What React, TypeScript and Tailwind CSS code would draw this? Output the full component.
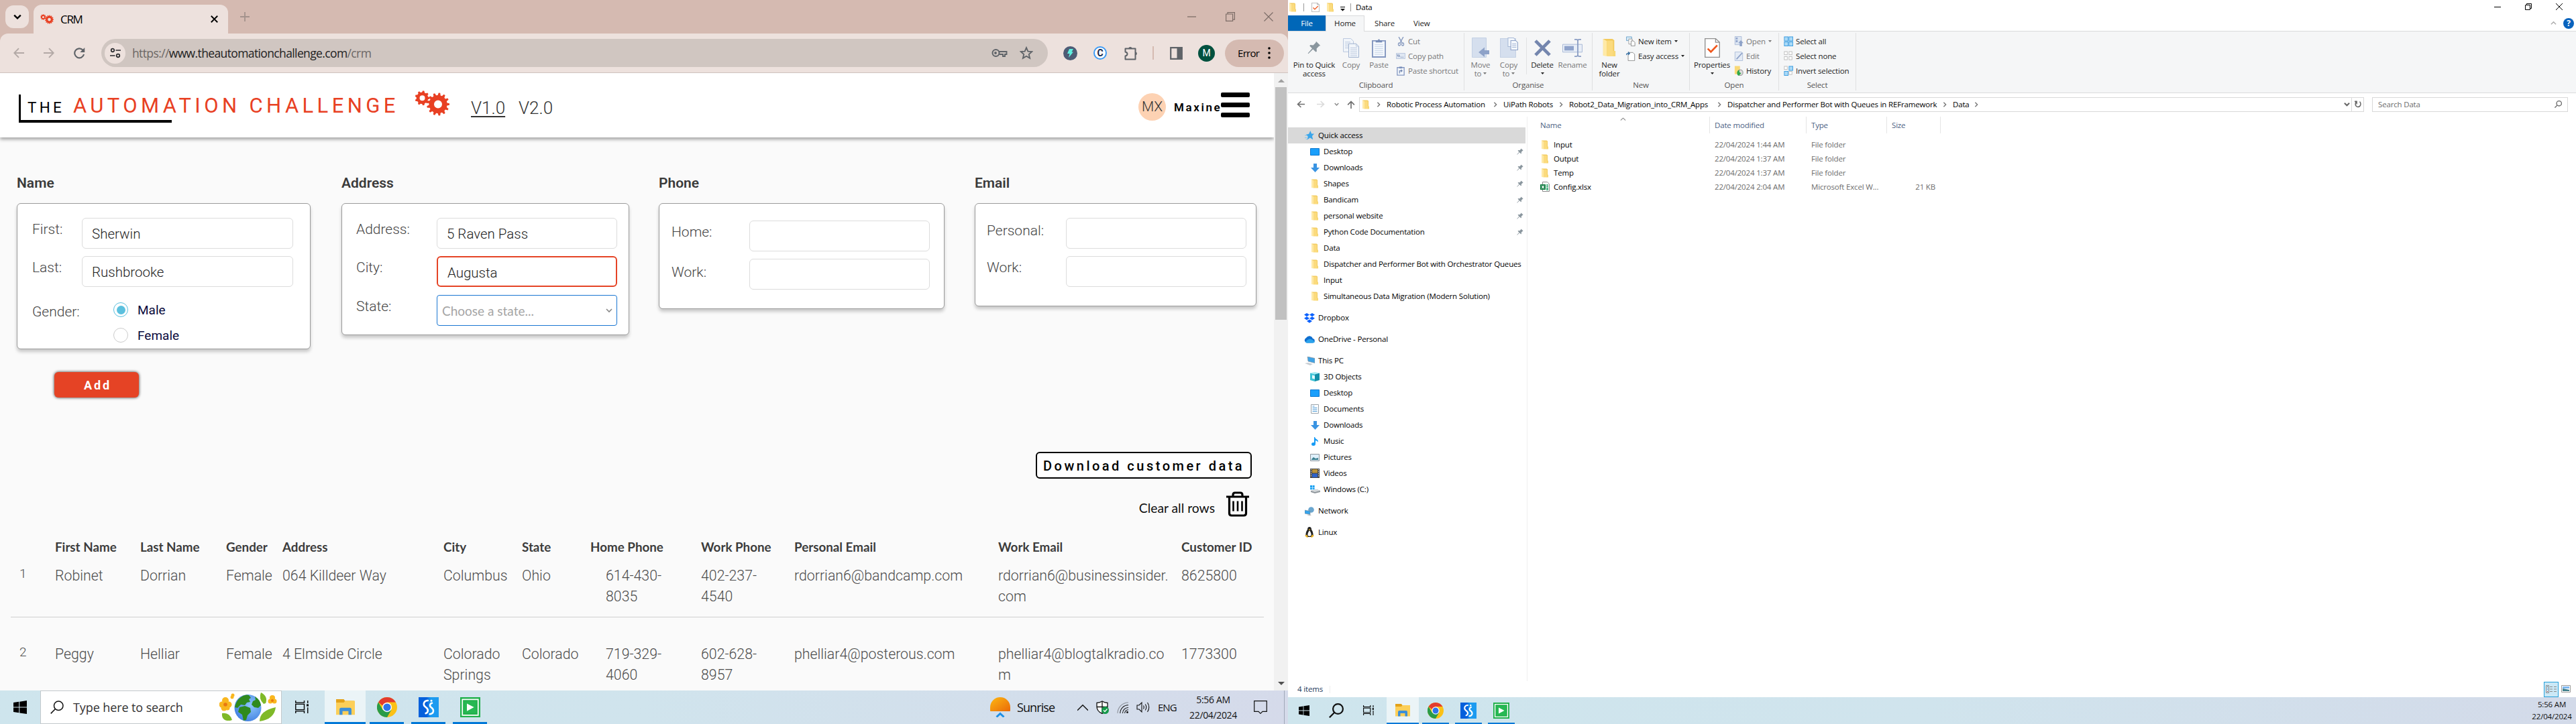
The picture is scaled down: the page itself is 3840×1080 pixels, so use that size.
import React from "react";

const SEG = "font-['Open_Sans',sans-serif]";
const BAR = "font-['Roboto',sans-serif]";
const LATO = "font-['Lato',sans-serif]";

type P = { className?: string };
type Kids = { className?: string; children?: React.ReactNode };

/* ---------- shared icons ---------- */

const Svg = ({ className = "", vb = "0 0 16 16", children }: Kids & { vb?: string }) => (
  <svg viewBox={vb} className={`shrink-0 ${className}`} fill="none" preserveAspectRatio="none">
    {children}
  </svg>
);

const gearPath = (cx: number, cy: number, r: number, n: number, hole: number) => {
  const pts: string[] = [];
  for (let i = 0; i < n; i++) {
    const a = (i / n) * Math.PI * 2;
    const s = (Math.PI * 2) / n;
    [
      [0.8, -0.32],
      [1, -0.15],
      [1, 0.15],
      [0.8, 0.32],
    ].forEach(([k, o]) => {
      pts.push(`${(cx + Math.cos(a + o * s) * r * k).toFixed(2)} ${(cy + Math.sin(a + o * s) * r * k).toFixed(2)}`);
    });
  }
  return `M${pts.join("L")}Z M${cx + hole} ${cy}a${hole} ${hole} 0 1 0 ${-2 * hole} 0a${hole} ${hole} 0 1 0 ${2 * hole} 0Z`;
};

const Gears = ({ className = "" }: P) => (
  <Svg className={className} vb="0 0 52 38">
    <path fillRule="evenodd" fill="#e84023" d={gearPath(11.5, 11.3, 11, 9, 4)} />
    <path fillRule="evenodd" fill="#e84023" d={gearPath(35, 20.5, 17, 13, 6)} />
  </Svg>
);

const Folder = ({ className = "" }: P) => (
  <Svg className={className} vb="0 0 12 14">
    <path d="M1 0.5h7.5l1.5 1v11.5H1z" fill="#f2ca5c" />
    <path d="M8.6 9.5l2.4 0v4H8.6z" fill="#f7d774" />
    <path d="M1 0.5l3 1.6v11.4L1 13z" fill="#ffe9a6" />
    <path d="M4 1.8h5v11.7H4z" fill="#fbdb7e" />
  </Svg>
);

const Pin = ({ className = "" }: P) => (
  <Svg className={className}>
    <path d="M10.4 0.6l5 5-1.6.6-2.9 3 .2 3.4-1.2.6-3.3-3.3L1 15.4l-.5-.6L5.6 9 2.6 6l.8-1.2 3.4.3 3-2.9z" fill="#8a969e" />
  </Svg>
);

const WinLogo = ({ className = "" }: P) => (
  <Svg className={className}>
    <path d="M0 2.4l6.6-1v6.2H0zM7.4 1.3L16 0v7.6H7.4zM0 8.4h6.6v6.2L0 13.6zM7.4 8.4H16V16l-8.600-1.200z" fill="#000" />
  </Svg>
);

const TaskView = ({ className = "" }: P) => (
  <Svg className={className}>
    <path d="M.6 0v2.6h10.2V0M.6 16v-2.6h10.2V16M.6 4.6h10.2v6.8H.6zM15 0v3.4M15 8.6V16" stroke="#000" strokeWidth="1.1" />
    <path d="M13.6 4.6h2.4v2.6h-2.4z" fill="#000" />
  </Svg>
);

const ExplorerIcon = ({ className = "" }: P) => (
  <Svg className={className} vb="0 0 22 19">
    <path d="M0 0h9l1.5 2H21v4H0z" fill="#e3a21a" />
    <path d="M0 4h9l1.6-2H22v16.5H0z" fill="#fccf59" />
    <path d="M4 18.5V12q0-2 2-2h10q2 0 2 2v6.5h-3.5V14h-7v4.500z" fill="#3c8fd8" />
  </Svg>
);

const Chrome = ({ className = "" }: P) => (
  <Svg className={className} vb="0 0 24 24">
    <circle cx="12" cy="12" r="12" fill="#fbc116" />
    <path d="M12 12l5.200 3L12 24A12 12 0 0 1 1.600 6l5.200 9z" fill="#2a9b48" />
    <path d="M12 0a12 12 0 0 1 10.400 6H12L6.500 10 1.600 6A12 12 0 0 1 12 0z" fill="#e33b2e" />
    <circle cx="12" cy="12" r="5.700" fill="#fff" />
    <circle cx="12" cy="12" r="4.500" fill="#2f74ea" />
  </Svg>
);

const StudioIcon = ({ className = "" }: P) => (
  <Svg className={className} vb="0 0 24 24">
    <defs>
      <linearGradient id="st" x1="0" y1="0" x2="1" y2="0">
        <stop offset="0.4" stopColor="#0560dc" />
        <stop offset="0.6" stopColor="#1d9bf0" />
      </linearGradient>
    </defs>
    <path d="M0 0h24v24H0z" fill="url(#st)" />
    <path d="M11 4C7 4 5.800 7 6.300 9.300c.7 3 5.400 3 4.700 7.200-.3 1.700-1.300 2.500-2.500 2.800" stroke="#fff" strokeWidth="2.100" strokeLinecap="round" />
    <path d="M16 7c-2.500.5-3 3-1.800 4.500 1.500 1.500 3.800 2 3.300 5.500-.4 2-2 3-4.200 3.200" stroke="#fff" strokeWidth="2.100" strokeLinecap="round" />
    <circle cx="15.200" cy="4.200" r="1.200" fill="#fff" />
  </Svg>
);

const RobotIcon = ({ className = "" }: P) => (
  <Svg className={className} vb="0 0 24 24">
    <path d="M0 0h24v24H0z" fill="#22b14c" />
    <path d="M2.600 2.600h18.800v18.800H2.600z" stroke="#fff" strokeWidth="1.400" />
    <path d="M5 5h14v14H5z" fill="#27b853" />
    <path d="M8 7.500l8.500 4.500L8 16.500z" fill="#fff" />
  </Svg>
);

const Magnifier = ({ className = "", w = 1.4 }: P & { w?: number }) => (
  <Svg className={className}>
    <circle cx="9.800" cy="6.200" r="5.400" stroke="currentColor" strokeWidth={w} />
    <path d="M6 10L.6 15.500" stroke="currentColor" strokeWidth={w} />
  </Svg>
);

const Chev = ({ className = "", d = "M1 3l4 4 4-4", w = 1.5 }: P & { d?: string; w?: number }) => (
  <Svg className={className} vb="0 0 10 10">
    <path d={d} stroke="currentColor" strokeWidth={w} />
  </Svg>
);

const Tri = ({ className = "" }: P) => (
  <Svg className={className} vb="0 0 8 4">
    <path d="M0 0h8L4 4z" fill="currentColor" />
  </Svg>
);

/* ---------- browser window ---------- */

const TabStrip = () => (
  <div className="flex h-[50px] items-end bg-[#d5bab1] text-black">
    <div className="mb-2 ml-2 flex h-[34px] w-[35px] items-center justify-center rounded-xl bg-[#ede1dd]">
      <Chev className="h-3 w-3" w={2} />
    </div>
    <div className="ml-[7px] flex h-[43px] w-[290px] items-center rounded-t-xl bg-[#ede1dd]">
      <Gears className="ml-[10px] h-[15px] w-5" />
      <span className={`${SEG} ml-[10px] w-[224px] shrink-0 text-[17px] tracking-[-1.3px]`}>CRM</span>
      <Svg className="h-[11px] w-[11px]" vb="0 0 10 10">
        <path d="M.7.7l8.600 8.600M9.300.7L.7 9.300" stroke="#000" strokeWidth="1.700" />
      </Svg>
    </div>
    <Svg className="mb-[18px] ml-[18px] h-[14px] w-[14px]" vb="0 0 14 14">
      <path d="M7 0v14M0 7h14" stroke="#a3928c" strokeWidth="1.800" />
    </Svg>
    <div className="mb-[18px] ml-auto mr-[22px] flex items-center gap-[43px]">
      <Svg className="h-[14px] w-[14px]" vb="0 0 14 14">
        <path d="M0 7h13" stroke="#7d6d67" strokeWidth="1.300" />
      </Svg>
      <Svg className="h-[14px] w-[14px]" vb="0 0 14 14">
        <path d="M.6 3h10v10.400h-10zM3 3V.6h10.400v10.600h-2.600" stroke="#7d6d67" strokeWidth="1.200" />
      </Svg>
      <Svg className="h-[14px] w-[14px]" vb="0 0 14 14">
        <path d="M.5.5l13 13M13.500.5l-13 13" stroke="#7d6d67" strokeWidth="1.200" />
      </Svg>
    </div>
  </div>
);

const Toolbar = () => (
  <div className="bg-[#d5bab1]">
    <div className="flex h-[59px] items-center rounded-t-xl border-b border-[#cfc3bf] bg-[#ede1dd] text-[#5f6368]">
      <Svg className="ml-5 h-4 w-4">
        <path d="M16 8H1.500M8 1.200L1.300 8 8 14.800" stroke="#b3a9a6" strokeWidth="1.900" />
      </Svg>
      <Svg className="ml-[29px] h-4 w-4">
        <path d="M0 8h14.500M8 1.200L14.700 8 8 14.800" stroke="#b3a9a6" strokeWidth="1.900" />
      </Svg>
      <Svg className="ml-[29px] h-[17px] w-[17px]">
        <path d="M14.200 9.500A6.600 6.600 0 1 1 12.600 3.300L14.500 5.200" stroke="#5f6368" strokeWidth="2" />
        <path d="M15.300 0v6.500H8.800z" fill="#5f6368" />
      </Svg>
      <div className="ml-6 flex h-[42px] w-[1411px] shrink-0 items-center rounded-full bg-[#d0c6c1]">
        <div className="ml-[5px] flex h-[31px] w-[31px] items-center justify-center rounded-full bg-[#ede1dd]">
          <Svg className="h-4 w-4" vb="0 0 16 16">
            <circle cx="4" cy="4" r="2.300" stroke="#28292c" strokeWidth="1.700" />
            <circle cx="12" cy="12" r="2.300" stroke="#28292c" strokeWidth="1.700" />
            <path d="M8.500 4H16M0 12h7.500" stroke="#28292c" strokeWidth="1.700" />
          </Svg>
        </div>
        <div className={`${SEG} ml-[10px] w-[1132px] whitespace-nowrap text-[17.5px] tracking-[-0.62px] text-[#6b6765]`}>
          https://<span className="text-[#222]">www.theautomationchallenge.com</span>/crm
        </div>
        <Svg className="ml-[149px] h-3 w-6" vb="0 0 24 12">
          <circle cx="6.500" cy="6" r="5" stroke="#5f6368" strokeWidth="2" />
          <circle cx="6" cy="6" r="1.900" fill="#5f6368" />
          <path d="M11 4h11.500v4H20v3h-3V8h-5.500" stroke="#5f6368" strokeWidth="1.900" />
        </Svg>
        <Svg className="ml-[18px] h-5 w-5">
          <path d="M8 1.700l1.900 4.400 4.700.4-3.600 3.100 1.100 4.700L8 11.800l-4.100 2.500L5 9.600 1.400 6.500l4.700-.4z" stroke="#5f6368" strokeWidth="1.500" />
        </Svg>
      </div>
      <div className="ml-[23px] flex h-[21px] w-[21px] items-center justify-center rounded-full bg-[#4d5b75]">
        <Svg className="h-[13px] w-[9px]" vb="0 0 9 13">
          <path d="M3 0h6L6.500 4.500H9L2 13l1.500-6H0z" fill="#5ff0e0" />
        </Svg>
      </div>
      <div className={`ml-6 flex h-5 w-5 items-center justify-center rounded-full border-2 border-[#3d9bf5] bg-white text-[14px] font-bold text-[#152447] ${BAR}`}>C</div>
      <Svg className="ml-[25px] h-[21px] w-[21px]" vb="0 0 21 21">
        <path d="M2.500 3.500h15v16h-15V14.500q3-.5 3-3t-3-3z" stroke="#5f6368" strokeWidth="2" strokeLinejoin="round" />
        <path d="M7.300 3.500a2.600 2.600 0 0 1 5.200 0zM17.500 8.500a2.400 2.400 0 0 1 0 4.800z" fill="#5f6368" />
      </Svg>
      <div className="ml-[22px] h-5 w-[2px] bg-[#d5bab1]" />
      <Svg className="ml-6 h-[19px] w-[19px]" vb="0 0 19 19">
        <path d="M1.200 1.200h16.600v16.600H1.200z" stroke="#5f6368" strokeWidth="2.200" />
        <path d="M10.500 1h7.500v17h-7.500z" fill="#5f6368" />
      </Svg>
      <div className={`ml-[23px] flex h-[25px] w-[25px] items-center justify-center rounded-full bg-[#01513f] text-[14px] text-white ${BAR}`}>M</div>
      <div className="ml-[15px] flex h-[41px] w-[88px] items-center rounded-full bg-[#d5bab1] text-black">
        <span className={`${SEG} ml-[19px] w-[45px] text-[15px] tracking-[-0.7px]`}>Error</span>
        <Svg className="h-[18px] w-1" vb="0 0 4 18">
          <circle cx="2" cy="2" r="1.800" fill="#000" />
          <circle cx="2" cy="9" r="1.800" fill="#000" />
          <circle cx="2" cy="16" r="1.800" fill="#000" />
        </Svg>
      </div>
    </div>
  </div>
);

const SiteHeader = () => (
  <div className={`${BAR} flex h-24 shrink-0 bg-white shadow-[0_3px_5px_rgba(0,0,0,0.35)]`}>
    <div className="ml-7 mt-[32px] h-[42px] w-[228px] shrink-0 border-b-4 border-l-[3px] border-black">
      <div className="flex h-full items-baseline whitespace-nowrap pl-[10px]">
        <span className="w-[68px] shrink-0 text-[22.5px] leading-[38px] tracking-[4.2px] text-black">THE</span>
        <span className="text-[31px] leading-[30px] tracking-[5.4px] text-[#e84023]">AUTOMATION CHALLENGE</span>
      </div>
    </div>
    <Gears className="ml-[362px] mt-[26px] h-[38px] w-[52px]" />
    <div className="ml-8 mt-[37px] w-[71px] whitespace-nowrap text-[26px] font-light leading-[30px] text-[#333]">
      <span className="underline decoration-2 underline-offset-[3px]">V1.0</span>
    </div>
    <div className="mt-[37px] whitespace-nowrap text-[26px] font-light leading-[30px] text-[#333]">V2.0</div>
    <div className="ml-auto mt-[30px] flex h-[41px] w-[41px] items-center justify-center rounded-full bg-[#fdd2b3] text-[21px] font-light text-[#333]">MX</div>
    <div className="ml-[12px] mt-[41px] w-[70px] whitespace-nowrap text-[17px] font-semibold leading-5 tracking-[2.6px] text-black">Maxine</div>
    <div className="mr-9 mt-[29px] flex w-[43px] flex-col gap-2">
      <div className="h-[7px] rounded-[2px] bg-black" />
      <div className="h-[7px] rounded-[2px] bg-black" />
      <div className="h-[7px] rounded-[2px] bg-black" />
    </div>
  </div>
);

const Card = ({ title, w, h, ml, pt = "pt-[21px]", children }: { title: string; w: string; h: string; ml: string; pt?: string; children?: React.ReactNode }) => (
  <div className={`${ml} ${w}`}>
    <div className="h-[42px] text-[21px] font-semibold leading-6 text-[#3a3a3a]">{title}</div>
    <div className={`${h} ${pt} rounded-md border border-[#9b9b9b] bg-white shadow-[0_4px_5px_rgba(0,0,0,0.2)]`}>{children}</div>
  </div>
);

const Field = ({ label, pl, lw, pt = "pt-[5px]", w = "w-[269px]", border = "border border-[#dcdcdc]", value }: { label: string; pl: string; lw: string; pt?: string; w?: string; border?: string; value?: string }) => (
  <div className={`flex h-[57px] ${pl}`}>
    <div className={`${lw} ${pt} shrink-0 whitespace-nowrap text-[21px] font-light leading-6 text-[#444]`}>{label}</div>
    <div className={`h-[46px] ${w} ${border} rounded-md bg-white pl-[14px] text-[20.5px] font-light leading-[47px] text-[#222]`}>{value}</div>
  </div>
);

const Form = () => (
  <div className={`${BAR} mt-[56px] flex h-[294px] shrink-0`}>
    <Card title="Name" ml="ml-[25px]" w="w-[438px]" h="h-[218px]">
      <Field label="First:" pl="pl-[22px]" lw="w-[74px]" w="w-[315px]" value="Sherwin" />
      <Field label="Last:" pl="pl-[22px]" lw="w-[74px]" w="w-[315px]" value="Rushbrooke" />
      <div className="flex pl-[22px]">
        <div className="w-[121px] pt-[14px] text-[21px] font-light leading-6 text-[#444]">Gender:</div>
        <div className="flex flex-col gap-[14px] pt-[11px] text-[19px] leading-[22px] text-[#0a0a3c]">
          <div className="flex items-center">
            <div className="mr-[14px] flex h-[22px] w-[22px] items-center justify-center rounded-full border border-[#5bc0de] bg-white">
              <div className="h-[13px] w-[13px] rounded-full bg-[#5bc0de]" />
            </div>
            <span className="mt-[2px]">Male</span>
          </div>
          <div className="flex items-center">
            <div className="mr-[14px] h-[22px] w-[22px] rounded-full border border-[#ccc] bg-white" />
            <span className="mt-[2px]">Female</span>
          </div>
        </div>
      </div>
    </Card>
    <Card title="Address" ml="ml-[46px]" w="w-[429px]" h="h-[197px]">
      <Field label="Address:" pl="pl-[21px]" lw="w-[120px]" value="5 Raven Pass" />
      <Field label="City:" pl="pl-[21px]" lw="w-[120px]" border="border-2 border-[#e54325]" value="Augusta" />
      <div className="flex pl-[21px]">
        <div className="w-[120px] pt-[6px] text-[21px] font-light leading-6 text-[#444]">State:</div>
        <div className="mt-px flex h-[46px] w-[269px] items-center rounded border border-[#1976d2] bg-white pl-[7px]">
          <span className={`${LATO} mt-[3px] w-[244px] text-[19px] text-[#a5a5a5]`}>Choose a state...</span>
          <Chev className="h-[10px] w-[10px] text-[#888]" w={1.6} />
        </div>
      </div>
    </Card>
    <Card title="Phone" ml="ml-[44px]" w="w-[426px]" h="h-[158px]" pt="pt-[25px]">
      <Field label="Home:" pl="pl-[18px]" lw="w-[116px]" />
      <Field label="Work:" pl="pl-[18px]" lw="w-[116px]" pt="pt-[8px]" />
    </Card>
    <Card title="Email" ml="ml-[45px]" w="w-[420px]" h="h-[154px]">
      <Field label="Personal:" pl="pl-[17px]" lw="w-[118px]" pt="pt-[7px]" />
      <Field label="Work:" pl="pl-[17px]" lw="w-[118px]" />
    </Card>
  </div>
);

const COLS =
  "grid grid-cols-[66px_127px_128px_84px_240px_117px_102px_165px_139px_304px_273px_1fr]";

const HEADS = ["", "First Name", "Last Name", "Gender", "Address", "City", "State", "Home Phone", "Work Phone", "Personal Email", "Work Email", "Customer ID"];
const ROWS = [
  ["Robinet", "Dorrian", "Female", "064 Killdeer Way", "Columbus", "Ohio", "614-430-\n8035", "402-237-\n4540", "rdorrian6@bandcamp.com", "rdorrian6@businessinsider.\ncom", "8625800"],
  ["Peggy", "Helliar", "Female", "4 Elmside Circle", "Colorado\nSprings", "Colorado", "719-329-\n4060", "602-628-\n8957", "phelliar4@posterous.com", "phelliar4@blogtalkradio.co\nm", "1773300"],
];

const Table = () => (
  <div className="ml-4 mt-[33px] w-[1868px] shrink-0">
    <div className={`${COLS} ${LATO} h-[39px] whitespace-nowrap text-[18.8px] font-bold leading-6 text-[#3c3c3c]`}>
      {HEADS.map((h, i) => (
        <div key={i}>{h}</div>
      ))}
    </div>
    {ROWS.map((r, n) => (
      <div key={n} className={`${COLS} ${BAR} ${n ? "h-[110px] pt-[39px]" : "h-[78px] border-b border-[#cfcfcf]"} whitespace-pre text-[21.3px] font-light leading-[31px] text-[#4c4c4c]`}>
        <div className="-mt-[3px] pl-[13px] text-[19px]">{n + 1}</div>
        {r.map((c, i) => (
          <div key={i} className={i === 6 ? "pl-[23px]" : ""}>
            {c}
          </div>
        ))}
      </div>
    ))}
  </div>
);

const Page = () => (
  <div className="flex h-[921px] overflow-hidden bg-[#fafafa]">
    <div className="flex w-[1899px] flex-col">
      <SiteHeader />
      <Form />
      <div className={`${BAR} ml-[81px] flex h-[38px] w-[126px] shrink-0 items-center justify-center rounded-md bg-[#e54325] pl-[3px] text-[18px] font-bold tracking-[2.8px] text-white shadow-[0_0_4px_rgba(0,0,0,0.8)]`}>Add</div>
      <div className={`${BAR} ml-[1544px] mt-[81px] flex h-[40px] w-[322px] shrink-0 items-center rounded-md border-2 border-black bg-white pl-[9px] text-[20px] font-medium tracking-[3.5px] text-black`}>
        <span className="mt-[2px] whitespace-nowrap">Download customer data</span>
      </div>
      <div className="flex h-[57px] shrink-0 justify-end pr-[37px] pt-[19px]">
        <span className={`${LATO} mr-[17px] mt-[13px] text-[19.3px] leading-6 text-[#111]`}>Clear all rows</span>
        <Svg className="h-[38px] w-[34px]" vb="0 0 34 38">
          <path d="M0 8h34M10 8V5.500Q10 2 13 2h8q3 0 3 3.500V8M4.500 8v24.500q0 3.500 3.500 3.500h18q3.500 0 3.500-3.500V8" stroke="#000" strokeWidth="3.200" />
          <path d="M10.500 14.500v15M17 14.500v15M23.500 14.500v15" stroke="#000" strokeWidth="2.600" />
        </Svg>
      </div>
      <Table />
    </div>
    <div className="flex w-[21px] flex-col items-center bg-[#f1f1f1]">
      <Tri className="mt-[9px] h-[5px] w-[10px] rotate-180 text-[#a0a0a0]" />
      <div className="mt-[7px] h-[347px] w-[17px] bg-[#c1c1c1]" />
      <Tri className="mb-2 mt-auto h-[5px] w-[10px] text-[#505050]" />
    </div>
  </div>
);

const SpringGlobe = () => (
  <Svg className="h-[44px] w-[86px]" vb="0 0 86 44">
    <defs>
      <radialGradient id="gl" cx="0.600" cy="0.400" r="0.700">
        <stop offset="0" stopColor="#8ec8fb" />
        <stop offset="1" stopColor="#3d7be0" />
      </radialGradient>
    </defs>
    <circle cx="42.500" cy="23" r="20" fill="url(#gl)" />
    <path d="M32 7q6-5 12-3l3 4-3 2 2 4-5 1-3 4-6-1-5 5-4-1q2-10 9-15zM53 6q8 5 9 13l-4 4-6-1-4-4 2-5 4-2zM30 22l8-2 8 3 1 6-5 5-2 7-4 1-2-9-6-4z" fill="#2f8a1e" />
    <path d="M4 31q11-2 15 10l-3 1Q3 43 4 31zM84 22q-2 18-24 21Q60 27 84 22zM62 0q11 6 7 16l-3 1Q58 9 62 0z" fill="#7fb928" />
    <g fill="#f9b71f">
      <circle cx="9" cy="12" r="5" />
      <circle cx="4" cy="18" r="4.500" />
      <circle cx="14" cy="18" r="4.500" />
      <circle cx="7" cy="23" r="4.500" />
      <circle cx="12" cy="23" r="3.500" />
      <circle cx="20" cy="4" r="2.500" />
      <circle cx="19" cy="7" r="2.500" />
      <circle cx="79" cy="8" r="4" />
      <circle cx="76" cy="13" r="3.500" />
      <circle cx="82" cy="13" r="3.500" />
    </g>
    <circle cx="9" cy="18" r="2.800" fill="#e87811" />
    <circle cx="79" cy="12" r="2" fill="#e87811" />
  </Svg>
);

const LeftTaskbar = () => (
  <div className={`${SEG} flex h-[50px] bg-gradient-to-r from-[#cee5ed] via-[#d0e4ed] to-[#d5daea] text-[#111]`}>
    <WinLogo className="ml-5 mt-[15px] h-5 w-5" />
    <div className="ml-5 flex w-[360px] items-center border border-[#c3c9cc] bg-white">
      <Magnifier className="ml-[14px] h-5 w-5 text-[#111]" w={1.2} />
      <span className="ml-[14px] w-[218px] whitespace-nowrap text-[18px] tracking-[-0.1px] text-[#333]">Type here to search</span>
      <SpringGlobe />
    </div>
    <TaskView className="ml-5 mt-[15px] h-[19px] w-5" />
    <div className="ml-6 flex w-[61px] flex-col items-center justify-between border-b-[3px] border-[#0078d7] bg-[#ebf4f7]">
      <ExplorerIcon className="mt-[13px] h-[24px] w-[28px]" />
    </div>
    <div className="ml-[6px] flex w-[51px] justify-center border-b-[3px] border-[#0078d7]">
      <Chrome className="mt-[10px] h-[30px] w-[30px]" />
    </div>
    <div className="ml-[11px] flex w-[51px] justify-center border-b-[3px] border-[#0078d7]">
      <StudioIcon className="mt-[10px] h-[30px] w-[30px]" />
    </div>
    <div className="ml-[11px] flex w-[51px] justify-center border-b-[3px] border-[#0078d7]">
      <RobotIcon className="mt-[10px] h-[30px] w-[30px]" />
    </div>
    <div className="ml-auto flex items-center">
      <Svg className="h-[30px] w-[30px]" vb="0 0 30 30">
        <defs>
          <linearGradient id="sun" x1="0" y1="0" x2="1" y2="1">
            <stop offset="0" stopColor="#fdb813" />
            <stop offset="1" stopColor="#ea6a08" />
          </linearGradient>
        </defs>
        <path d="M0 20V15a15 15 0 0 1 30 0v5q0 1-1 1H1q-1 0-1-1z" fill="url(#sun)" />
        <path d="M9.500 29.500l5.500-5 5.500 5" stroke="#1e90e5" strokeWidth="3" />
      </Svg>
      <span className="ml-[10px] w-[90px] text-[18px] tracking-[-0.9px]">Sunrise</span>
      <Chev className="h-4 w-4" d="M0 8l5-5 5 5" w={0.9} />
      <Svg className="ml-[11px] h-5 w-5" vb="0 0 20 20">
        <path d="M10 1q4 2.500 8 2.500V9q0 7-8 10.500Q2 16 2 9V3.500Q6 3.500 10 1z" fill="#fff" stroke="#111" strokeWidth="1.300" />
        <path d="M10 1v18M2 9.500h16" stroke="#111" strokeWidth="1.300" />
        <circle cx="14.500" cy="14.500" r="5.500" fill="#16984a" />
        <path d="M12 14.500l2 2 3.500-4" stroke="#fff" strokeWidth="1.200" />
      </Svg>
      <Svg className="ml-3 h-[17px] w-[17px]">
        <path d="M1 16A15 15 0 0 1 16 1" stroke="#8a9098" />
        <path d="M4.500 16A11.500 11.500 0 0 1 16 4.500M8 16a8 8 0 0 1 8-8M11 16a5 5 0 0 1 5-5" stroke="#111" />
        <circle cx="14.600" cy="14.600" r="1.400" fill="#111" />
      </Svg>
      <Svg className="ml-3 h-[18px] w-5" vb="0 0 20 18">
        <path d="M1 6h3l4-4v14l-4-4H1z" stroke="#111" strokeWidth="1.100" />
        <path d="M10.500 6.500q1.500 2.500 0 5M13.300 4.500q3 4.500 0 9M16.500 2q4.500 7 0 14" stroke="#111" strokeWidth="1.100" />
      </Svg>
      <span className="ml-[12px] w-[45px] text-[15px] tracking-[-1px]">ENG</span>
      <div className="w-[75px] whitespace-nowrap text-center text-[14px] leading-[23px] tracking-[-0.35px]">
        5:56 AM
        <br />
        22/04/2024
      </div>
      <Svg className="ml-[23px] h-5 w-5" vb="0 0 20 20">
        <path d="M.7.7h18.600v15.600H13l-3 3-3-3H.7z" stroke="#111" strokeWidth="1.200" />
      </Svg>
      <div className="ml-[25px] mr-[5px] h-[50px] w-px bg-[#9fa8b8]" />
    </div>
  </div>
);

/* ---------- file explorer ---------- */

const CheckDoc = ({ className = "" }: P) => (
  <Svg className={className} vb="0 0 22 30">
    <path d="M.7.7h15l5.600 5.600v23H.7z" fill="#fff" stroke="#8f8f8f" strokeWidth="1.300" />
    <path d="M15.700.7v5.600h5.600" stroke="#8f8f8f" strokeWidth="1.300" />
    <path d="M4.500 16l4.500 5 9-10" stroke="#f0571c" strokeWidth="2.600" />
  </Svg>
);

const CopyIcon = ({ className = "" }: P) => (
  <Svg className={className} vb="0 0 24 30">
    <path d="M.5.5h11l4 4V21H.5z" fill="#f1f5fa" stroke="#b9c7dd" />
    <path d="M3 6h8M3 9h10M3 12h10M3 15h10" stroke="#b9c7dd" />
    <path d="M8.500 8.500h11l4 4v17h-15z" fill="#f1f5fa" stroke="#9fb1cf" />
    <path d="M19.500 8.500v4h4M11 15h10M11 18h10M11 21h10M11 24h10M11 27h10" stroke="#b9c7dd" />
  </Svg>
);

const PasteIcon = ({ className = "" }: P) => (
  <Svg className={className} vb="0 0 22 30">
    <path d="M1 4h20v25H1z" fill="#f3f7fc" stroke="#8497c0" strokeWidth="2" />
    <path d="M6 3h3.500a1.500 1.500 0 0 1 3 0H16v3.500H6z" fill="#7a8fb9" />
    <path d="M4.500 10h13M4.500 13h13M4.500 16h13M4.500 19h13M4.500 22h13M4.500 25h13" stroke="#c7d4e8" />
  </Svg>
);

const MoveIcon = ({ className = "" }: P) => (
  <Svg className={className} vb="0 0 26 30">
    <path d="M.5.5h21v29H.5z" fill="#d5dfee" stroke="#c3d0e4" />
    <path d="M10 22l9-7.500v4.500h7v6h-7v4z" fill="#8ea2c8" />
  </Svg>
);

const CopyToIcon = ({ className = "" }: P) => (
  <Svg className={className} vb="0 0 26 30">
    <path d="M.5 1.500h22v28H.5z" fill="#d5dfee" stroke="#c3d0e4" />
    <path d="M11.500.5h8l2 2v11h-10z" fill="#f3f7fc" stroke="#a7b8d6" />
    <path d="M15.500 4.500h7l3 3v11h-10z" fill="#f3f7fc" stroke="#8ea2c8" />
    <path d="M17.500 9.500h6M17.500 12h6M17.500 14.500h6" stroke="#a7b8d6" />
  </Svg>
);

const DeleteIcon = ({ className = "" }: P) => (
  <Svg className={className} vb="0 0 26 26">
    <path d="M2 2l22 22M24 2L2 24" stroke="#7486ae" strokeWidth="5" />
  </Svg>
);

const RenameIcon = ({ className = "" }: P) => (
  <Svg className={className} vb="0 0 30 28">
    <path d="M.5 8.500h29v12H.5z" fill="#e8eef7" stroke="#a9bad6" />
    <path d="M3 11h14v7H3z" fill="#8fa3cb" />
    <path d="M18 1h3q2 0 2 2v22q0 2-2 2h-3M28 1h-3q-2 0-2 2v22q0 2 2 2h3" stroke="#8a9dc4" strokeWidth="1.800" />
  </Svg>
);

const CutIcon = ({ className = "" }: P) => (
  <Svg className={className}>
    <path d="M3 0l7 10M13 0L6 10" stroke="#8497bd" strokeWidth="1.800" />
    <circle cx="4.300" cy="12.600" r="2.300" stroke="#8497bd" strokeWidth="1.600" />
    <circle cx="11.700" cy="12.600" r="2.300" stroke="#8497bd" strokeWidth="1.600" />
  </Svg>
);

const CopyPathIcon = ({ className = "" }: P) => (
  <Svg className={className} vb="0 0 16 10">
    <path d="M.5.5h15v9H.5z" fill="#dfe7f2" stroke="#b3c2db" />
    <path d="M2 2.500l2 4M4.500 2.500l2 4M8 7h1.500M11 7h1.500" stroke="#6e83ad" strokeWidth="1.200" />
  </Svg>
);

const PasteShortcutIcon = ({ className = "" }: P) => (
  <Svg className={className} vb="0 0 14 16">
    <path d="M1 2h12v13H1z" fill="#f3f7fc" stroke="#8497c0" strokeWidth="1.500" />
    <path d="M4.500.5h5v3h-5z" fill="#7a8fb9" />
    <path d="M5 12V7.500h4.500M7.500 5.500l2 2-2 2" stroke="#6e83ad" strokeWidth="1.300" />
  </Svg>
);

const NewItemIcon = ({ className = "" }: P) => (
  <Svg className={className}>
    <path d="M.5 1h9v6h-9z" fill="#d4e9f7" stroke="#6ba1c8" />
    <path d="M4.500 4.500h6v8h-6z" fill="#fff" stroke="#999" />
    <path d="M8.500 7.500h4l2.500 2.500v5.500H8.500z" fill="#fff" stroke="#888" />
  </Svg>
);

const EasyIcon = ({ className = "" }: P) => (
  <Svg className={className}>
    <path d="M3.500 1.500h8l3 3v11h-11z" fill="#fff" stroke="#888" />
    <path d="M0 6q0-3 5-3M3.500.5L6 3 3.500 5.500" stroke="#2f6ca3" strokeWidth="1.500" />
  </Svg>
);

const OpenIcon = ({ className = "" }: P) => (
  <Svg className={className}>
    <path d="M1.500.5h11v13h-11z" fill="#dde6f2" stroke="#a9bad6" />
    <path d="M3 2h3v3H3zM3 6.500h3v3H3z" fill="#8fa3cb" />
    <path d="M11.500 6.500l4.500 4.500h-2.500v5h-4v-5H7z" fill="#8ea2c8" />
  </Svg>
);

const EditIcon = ({ className = "" }: P) => (
  <Svg className={className}>
    <path d="M1.500.5h11l2 2v13h-13z" fill="#e4ebf5" stroke="#a9bad6" />
    <path d="M4 13L14 2" stroke="#8ea2c8" strokeWidth="2" />
  </Svg>
);

const HistoryIcon = ({ className = "" }: P) => (
  <Svg className={className}>
    <path d="M1 .5h9v13H1z" fill="#f9d976" />
    <circle cx="10.500" cy="11" r="4.500" fill="#dcdcdc" stroke="#888" />
    <path d="M5 12a5 5 0 0 1 4-5v3l3 2-4 4q-3-1-3-4z" fill="#2fa84a" />
  </Svg>
);

const SelIcon = ({ className = "", f }: P & { f: number[] }) => (
  <Svg className={className}>
    {[0, 1, 2, 3].map((i) => (
      <rect key={i} x={(i % 2) * 8 + 1} y={Math.floor(i / 2) * 8 + 1} width={f[i] ? 6.500 : 5} height={f[i] ? 6.500 : 5} fill={f[i] ? "#a9d9f7" : "#fff"} stroke={f[i] ? "#379be0" : "#bbb"} />
    ))}
  </Svg>
);

const Big = ({ w, label, second, dis, arrow, children }: { w: string; label: string; second?: string; dis?: boolean; arrow?: boolean; children: React.ReactNode }) => (
  <div className={`${w} flex shrink-0 flex-col items-center whitespace-nowrap ${dis ? "text-[#777]" : "text-[#222]"}`}>
    <div className="flex h-[41px] items-center pt-[4px]">{children}</div>
    <div className="leading-[13px]">{label}</div>
    <div className="flex h-[13px] items-center gap-[3px] leading-[13px]">
      {second}
      {arrow && <Tri className="h-[3px] w-[5px]" />}
    </div>
  </div>
);

const Small = ({ text, dis, arrow, children }: { text: string; dis?: boolean; arrow?: boolean; children: React.ReactNode }) => (
  <div className={`flex h-[22px] items-center whitespace-nowrap ${dis ? "text-[#777]" : "text-[#222]"}`}>
    <div className="mr-[4px] flex w-[14px] justify-center">{children}</div>
    {text}
    {arrow && <Tri className="ml-1 h-[3px] w-[5px]" />}
  </div>
);

const Group = ({ w, label, children }: { w: string; label: string; children: React.ReactNode }) => (
  <div className={`${w} mb-[3px] mt-[2px] flex flex-col border-r border-[#dfe0e1]`}>
    <div className="flex h-[72px]">{children}</div>
    <div className="text-center leading-4 text-[#555]">{label}</div>
  </div>
);

const Ribbon = () => (
  <div className="flex h-[93px] border-y border-[#dadbdc] bg-[#f5f6f7]">
    <Group w="w-[263px]" label="Clipboard">
      <Big w="w-[78px]" label="Pin to Quick" second="access">
        <Pin className="h-5 w-5" />
      </Big>
      <Big w="w-[32px]" label="Copy" dis>
        <CopyIcon className="h-[29px] w-6" />
      </Big>
      <Big w="w-[51px]" label="Paste" dis>
        <PasteIcon className="h-[29px] w-[21px]" />
      </Big>
      <div className="pt-[2px]">
        <Small text="Cut" dis>
          <CutIcon className="h-[14px] w-[11px]" />
        </Small>
        <Small text="Copy path" dis>
          <CopyPathIcon className="h-[9px] w-[14px]" />
        </Small>
        <Small text="Paste shortcut" dis>
          <PasteShortcutIcon className="h-[14px] w-3" />
        </Small>
      </div>
    </Group>
    <Group w="w-[191px]" label="Organise">
      <Big w="w-[48px]" label="Move" second="to" dis arrow>
        <MoveIcon className="h-[30px] w-[26px]" />
      </Big>
      <Big w="w-[36px]" label="Copy" second="to" dis arrow>
        <CopyToIcon className="h-[30px] w-[27px]" />
      </Big>
      <div className="ml-2 mt-[7px] h-[55px] w-px bg-[#e2e3e4]" />
      <Big w="w-[46px]" label="Delete" arrow>
        <DeleteIcon className="h-[25px] w-[25px]" />
      </Big>
      <Big w="w-[44px]" label="Rename" dis>
        <RenameIcon className="h-[27px] w-[30px]" />
      </Big>
    </Group>
    <Group w="w-[145px]" label="New">
      <Big w="w-[50px]" label="New" second="folder">
        <Folder className="h-[28px] w-[22px]" />
      </Big>
      <div className="pt-[2px]">
        <Small text="New item" arrow>
          <NewItemIcon className="h-[15px] w-[14px]" />
        </Small>
        <Small text="Easy access" arrow>
          <EasyIcon className="h-[14px] w-[14px]" />
        </Small>
      </div>
    </Group>
    <Group w="w-[133px]" label="Open">
      <Big w="w-[66px]" label="Properties" arrow>
        <CheckDoc className="h-[29px] w-[23px]" />
      </Big>
      <div className="pt-[2px]">
        <Small text="Open" dis arrow>
          <OpenIcon className="h-[15px] w-[14px]" />
        </Small>
        <Small text="Edit" dis>
          <EditIcon className="h-[14px] w-[14px]" />
        </Small>
        <Small text="History">
          <HistoryIcon className="h-[15px] w-[14px]" />
        </Small>
      </div>
    </Group>
    <Group w="w-[115px]" label="Select">
      <div className="pl-[7px] pt-[2px]">
        <Small text="Select all">
          <SelIcon className="h-[15px] w-[14px]" f={[1, 1, 1, 1]} />
        </Small>
        <Small text="Select none">
          <SelIcon className="h-[15px] w-[14px]" f={[0, 0, 0, 0]} />
        </Small>
        <Small text="Invert selection">
          <SelIcon className="h-[15px] w-[14px]" f={[0, 1, 1, 0]} />
        </Small>
      </div>
    </Group>
  </div>
);

const QatSep = ({ className = "" }: P) => <div className={`h-3 w-px bg-[#999] ${className}`} />;

const ExplorerTop = () => (
  <>
    <div className="flex h-[23px] items-center text-black">
      <Folder className="ml-[1px] h-[14px] w-[12px]" />
      <QatSep className="ml-[10px]" />
      <CheckDoc className="ml-[11px] h-[14px] w-3" />
      <Folder className="ml-[10px] h-[14px] w-[12px]" />
      <Svg className="ml-[9px] mt-1 h-[7px] w-[7px]" vb="0 0 7 7">
        <path d="M0 .5h7" stroke="#000" />
        <path d="M0 3h7L3.500 6.500z" fill="#000" />
      </Svg>
      <QatSep className="ml-[8px]" />
      <span className="ml-[7px]">Data</span>
      <div className="ml-auto mr-5 flex items-center gap-[36px] pb-[3px]">
        <Svg className="h-[10px] w-[10px]" vb="0 0 10 10">
          <path d="M0 5.500h10" stroke="#000" />
        </Svg>
        <Svg className="h-[10px] w-[10px]" vb="0 0 10 10">
          <path d="M.5 2.500h7v7h-7zM2.500 2.500v-2h7v7h-2" stroke="#000" />
        </Svg>
        <Svg className="h-[10px] w-[10px]" vb="0 0 10 10">
          <path d="M0 0l10 10M10 0L0 10" stroke="#000" />
        </Svg>
      </div>
    </div>
    <div className="relative z-10 -mb-px flex h-[24px] items-center text-[#222]">
      <div className="flex h-[23px] w-[56px] items-center justify-center bg-[#0067b8] text-white">File</div>
      <div className="flex h-full w-[58px] items-center justify-center border-x border-t border-[#dadbdc] bg-[#f5f6f7]">Home</div>
      <span className="ml-[15px] w-[58px]">Share</span>
      <span>View</span>
      <div className="ml-auto mr-[3px] flex items-center">
        <Chev className="mr-[10px] h-[9px] w-[9px] text-[#aaa]" d="M1 7l4-4 4 4" />
        <div className="flex h-4 w-4 items-center justify-center rounded-full bg-[#0a63bd] text-[12px] font-bold text-white">?</div>
      </div>
    </div>
  </>
);

const CRUMBS: [string, string][] = [
  ["Robotic Process Automation", "w-[174px]"],
  ["UiPath Robots", "w-[98px]"],
  ["Robot2_Data_Migration_into_CRM_Apps", "w-[236px]"],
  ["Dispatcher and Performer Bot with Queues in REFramework", "w-[336px]"],
  ["Data", "w-[47px]"],
];

const AddressBar = () => (
  <div className="flex h-[36px] items-start pt-[6px] text-black">
    <div className="flex h-[22px] w-[106px] items-center">
      <Svg className="ml-[13px] h-[11px] w-3">
        <path d="M16 8H2M8.500 1.500L2 8l6.500 6.500" stroke="#6d6d6d" strokeWidth="2.200" />
      </Svg>
      <Svg className="ml-[18px] h-[11px] w-3">
        <path d="M0 8h14M7.500 1.500L14 8l-6.500 6.500" stroke="#dadada" strokeWidth="2.200" />
      </Svg>
      <Chev className="ml-[14px] h-[7px] w-[7px] text-[#888]" w={2} />
      <Svg className="ml-[12px] h-3 w-3">
        <path d="M8 16V2M1.500 8.500L8 2l6.500 6.500" stroke="#6d6d6d" strokeWidth="2.200" />
      </Svg>
    </div>
    <div className="flex h-[22px] w-[1498px] items-center border border-[#d9d9d9]">
      <Folder className="ml-[3px] h-[14px] w-[12px]" />
      <Chev className="ml-[9px] h-[8px] w-[8px] text-[#777]" d="M3 1l4 4-4 4" w={1.800} />
      {CRUMBS.map(([t, w], i) => (
        <div key={i} className={`${w} pl-[8px] flex shrink-0 items-center justify-between whitespace-nowrap`}>
          {t}
          <Chev className="h-[8px] w-[8px] text-[#777]" d="M3 1l4 4-4 4" w={1.800} />
        </div>
      ))}
      <Chev className="ml-auto mr-[2px] h-[9px] w-[9px] text-[#666]" w={2.200} />
      <div className="flex h-full w-[18px] items-center justify-center border-l border-[#d9d9d9]">
        <Svg className="h-[11px] w-[10px]">
          <path d="M12 2.500a6.300 6.300 0 1 1-7.500-.2M5 8V2H0" stroke="#666" strokeWidth="2.400" />
        </Svg>
      </div>
    </div>
    <div className="ml-3 flex h-[22px] w-[292px] items-center border border-[#d9d9d9] text-[#6d6d6d]">
      <span className="ml-2">Search Data</span>
      <Magnifier className="ml-auto mr-2 h-[11px] w-[11px]" w={2} />
    </div>
  </div>
);

const navIcons: Record<string, React.ReactNode> = {
  star: (
    <Svg className="h-[14px] w-[14px]">
      <path d="M9.500 0l2 5H16l-3.500 4 1.500 6-5-3-5 3.500L5.500 10 2 6.500l5-1z" fill="#3aa5ea" />
      <path d="M0 8h5M0 12h4M2 14.500h3" stroke="#7cc4f0" />
    </Svg>
  ),
  desktop: (
    <Svg className="h-[11px] w-[14px]" vb="0 0 14 11">
      <path d="M.5.5h13v10H.5z" fill="#1a9ffb" stroke="#0b77cf" />
    </Svg>
  ),
  down: (
    <Svg className="h-[13px] w-[13px]" vb="0 0 13 13">
      <path d="M4 0h5v6h4l-6.500 7L0 6h4z" fill="#3a94e2" />
    </Svg>
  ),
  folder: <Folder className="h-[14px] w-[12px]" />,
  dropbox: (
    <Svg className="h-[15px] w-[16px]" vb="0 0 16 15">
      <path d="M4 0l4 2.600-4 2.600L0 2.600zM12 0l4 2.600-4 2.600-4-2.600zM4 5.200l4 2.600-4 2.600L0 7.800zM12 5.200l4 2.600-4 2.600-4-2.600zM8 9.500l4 2.600-4 2.600-4-2.600z" fill="#0a61fe" />
    </Svg>
  ),
  onedrive: (
    <Svg className="h-[11px] w-[16px]" vb="0 0 16 11">
      <path d="M4 10.500a4 4 0 0 1-1-7.500Q5 0 8.500.3 12 1 13 4a3.300 3.300 0 0 1 0 6.500z" fill="#0f6fd0" />
      <path d="M2 9.500Q6 4 10 5q3 .5 6 4-1 1.500-3 1.500H4q-1.500 0-2-1z" fill="#2ba3ec" />
    </Svg>
  ),
  pc: (
    <Svg className="h-[13px] w-[15px]" vb="0 0 15 13">
      <path d="M4 0l11 2.500v7L5 7z" fill="#3fa3e6" stroke="#8a949c" strokeWidth=".7" />
      <path d="M0 10l5-1 7 2-4 2z" fill="#c9ced3" />
    </Svg>
  ),
  cube: (
    <Svg className="h-[14px] w-[14px]" vb="0 0 14 14">
      <path d="M0 1.500L7 0l7 1.500L7 3.500z" fill="#a5ecf3" />
      <path d="M0 1.500l7 2V14l-7-2z" fill="#3cc3d6" />
      <path d="M14 1.500l-7 2V14l7-2z" fill="#138fa8" />
      <path d="M3 4.500l4 1v5l-4-1z" fill="#e7fbfd" />
    </Svg>
  ),
  doc: (
    <Svg className="h-[14px] w-[12px]" vb="0 0 12 14">
      <path d="M.5.5h11v13H.5z" fill="#fff" stroke="#9aa3aa" />
      <path d="M2.500 3h3M2.500 5.500h7M2.500 8h7M2.500 10.500h7" stroke="#4d9bd6" />
    </Svg>
  ),
  music: (
    <Svg className="h-[13px] w-[10px]" vb="0 0 10 13">
      <path d="M5 0q.500 2.500 3 3.500t1.500 4Q8.500 5 6 5v5q0 3-3 3T0 10.500 3 8q1 0 1 .2V0z" fill="#169bf5" />
    </Svg>
  ),
  pics: (
    <Svg className="h-[11px] w-[14px]" vb="0 0 14 11">
      <path d="M.5.5h13v10H.5z" fill="#dff0fb" stroke="#8f979d" />
      <path d="M2 8l3-3 3 2 4-1v3H2z" fill="#3b7f8f" />
    </Svg>
  ),
  video: (
    <Svg className="h-[14px] w-[14px]" vb="0 0 14 14">
      <path d="M0 0h14v14H0z" fill="#444" />
      <path d="M3 1h8v5.500H3z" fill="#b9923a" />
      <path d="M3 7.500h8V13H3z" fill="#2e62c9" />
      <path d="M1.500 1v12M12.500 1v12" stroke="#eee" strokeDasharray="1.500 1.500" />
    </Svg>
  ),
  drive: (
    <Svg className="h-[12px] w-[15px]" vb="0 0 15 12">
      <path d="M0 0h3v3H0zM3.600 0h3v3h-3zM0 3.500h3v2.800H0zM3.600 3.500h3v2.800h-3z" fill="#1ba1f2" />
      <path d="M1 8l9-2 5 2v2l-8 2-6-2z" fill="#8e959b" />
      <path d="M1 8l9-2 5 2-8 2z" fill="#d4d8db" />
    </Svg>
  ),
  net: (
    <Svg className="h-[13px] w-[14px]" vb="0 0 14 13">
      <circle cx="9.500" cy="4.500" r="4.300" fill="#6aa6cf" />
      <path d="M0 5l8 1.500v5L0 10z" fill="#35a4ec" stroke="#7b8790" strokeWidth=".600" />
      <path d="M3 12l5-.500 2 1-3 .500z" fill="#aaa" />
    </Svg>
  ),
  linux: (
    <Svg className="h-[16px] w-[14px]" vb="0 0 14 16">
      <path d="M7 0q3 0 3 4 3 4 2.500 9L10 15H4l-2.500-2Q1 8 4 4q0-4 3-4z" fill="#222" />
      <path d="M7 5.500q3 3 2.500 7.500-2.500 1.500-5 0Q4 8.500 7 5.500z" fill="#fff" />
      <path d="M5.500 3.500h3L7 5.500zM0 13l3-1.500 2 3.500-1.500 1zM14 13l-3-1.500L9 15l1.500 1z" fill="#e9b121" />
    </Svg>
  ),
};

type Nav = { t: string; i: string; sub?: boolean; pin?: boolean; gap?: boolean; sel?: boolean };
const NAV: Nav[] = [
  { t: "Quick access", i: "star", sel: true },
  { t: "Desktop", i: "desktop", sub: true, pin: true },
  { t: "Downloads", i: "down", sub: true, pin: true },
  { t: "Shapes", i: "folder", sub: true, pin: true },
  { t: "Bandicam", i: "folder", sub: true, pin: true },
  { t: "personal website", i: "folder", sub: true, pin: true },
  { t: "Python Code Documentation", i: "folder", sub: true, pin: true },
  { t: "Data", i: "folder", sub: true },
  { t: "Dispatcher and Performer Bot with Orchestrator Queues", i: "folder", sub: true },
  { t: "Input", i: "folder", sub: true },
  { t: "Simultaneous Data Migration (Modern Solution)", i: "folder", sub: true },
  { t: "Dropbox", i: "dropbox", gap: true },
  { t: "OneDrive - Personal", i: "onedrive", gap: true },
  { t: "This PC", i: "pc", gap: true },
  { t: "3D Objects", i: "cube", sub: true },
  { t: "Desktop", i: "desktop", sub: true },
  { t: "Documents", i: "doc", sub: true },
  { t: "Downloads", i: "down", sub: true },
  { t: "Music", i: "music", sub: true },
  { t: "Pictures", i: "pics", sub: true },
  { t: "Videos", i: "video", sub: true },
  { t: "Windows (C:)", i: "drive", sub: true },
  { t: "Network", i: "net", gap: true },
  { t: "Linux", i: "linux", gap: true },
];

const NavPane = () => (
  <div className="h-[842px] w-[357px] border-r border-[#f0f0f0] pt-4 text-black">
    {NAV.map((n, k) => (
      <div key={k} className={`flex h-6 w-[354px] items-center whitespace-nowrap ${n.gap ? "mt-2" : ""} ${n.sel ? "bg-[#d9d9d9]" : ""} ${n.sub ? "pl-8" : "pl-6"}`}>
        <div className="mr-[5px] flex w-4 shrink-0 justify-center">{navIcons[n.i]}</div>
        {n.t}
        {n.pin && <Pin className="ml-auto mr-[3px] h-[10px] w-[10px]" />}
      </div>
    ))}
  </div>
);

const Excel = () => (
  <Svg className="h-[15px] w-[14px]" vb="0 0 14 15">
    <path d="M3.500.5h7l3 3v11h-10z" fill="#fff" stroke="#8a8a8a" />
    <path d="M9 5h3M9 7.500h3M9 10h3M9 12h3" stroke="#21a366" strokeWidth="1.300" />
    <path d="M0 4h8v8H0z" fill="#107c41" />
    <path d="M2.200 5.800l3.600 4.400M5.800 5.800L2.200 10.200" stroke="#fff" strokeWidth="1.200" />
  </Svg>
);

const FCOLS = "grid grid-cols-[272px_144px_120px_80px]";
const FILES = [
  ["Input", "22/04/2024 1:44 AM", "File folder", ""],
  ["Output", "22/04/2024 1:37 AM", "File folder", ""],
  ["Temp", "22/04/2024 1:37 AM", "File folder", ""],
  ["Config.xlsx", "22/04/2024 2:04 AM", "Microsoft Excel W...", "21 KB"],
];

const FileList = () => (
  <div>
    <div className={`${FCOLS} h-[31px] text-[#4c5f83]`}>
      {["Name", "Date modified", "Type", "Size"].map((h, i) => (
        <div key={h} className="relative flex h-[25px] items-center border-r border-[#e5e5e5]">
          <span className={i ? "pl-[7px]" : "pl-[19px]"}>{h}</span>
          {i === 0 && <Chev className="absolute left-[138px] top-0 h-[7px] w-[9px] text-[#777]" d="M1 8l4-5 4 5" w={1.200} />}
        </div>
      ))}
    </div>
    {FILES.map((f, i) => (
      <div key={i} className={`${FCOLS} h-[21px] items-center whitespace-nowrap text-[#6d6d6d]`}>
        <div className="flex items-center pl-[19px] text-black">
          <div className="mr-[6px] flex w-[14px] justify-center">{i === 3 ? <Excel /> : <Folder className="h-[14px] w-[12px]" />}</div>
          {f[0]}
        </div>
        <div className="pl-[7px]">{f[1]}</div>
        <div className="pl-[7px]">{f[2]}</div>
        <div className="pr-[8px] text-right">{f[3]}</div>
      </div>
    ))}
  </div>
);

const RightTaskbar = () => (
  <div className="flex h-10 bg-gradient-to-r from-[#cee5ed] via-[#d0e4ed] to-[#d3dae9] text-[#111]">
    <WinLogo className="ml-4 mt-3 h-4 w-4" />
    <Magnifier className="ml-[29px] mt-[9px] h-[22px] w-[22px]" w={1.600} />
    <TaskView className="ml-[29px] mt-3 h-[15px] w-4" />
    <div className="ml-[19px] flex w-12 justify-center border-b-2 border-[#0078d7] bg-[#ebf4f7]">
      <ExplorerIcon className="mt-[10px] h-[19px] w-[22px]" />
    </div>
    <div className="ml-[5px] flex w-10 justify-center border-b-2 border-[#0078d7]">
      <Chrome className="mt-2 h-6 w-6" />
    </div>
    <div className="ml-[9px] flex w-10 justify-center border-b-2 border-[#0078d7]">
      <StudioIcon className="mt-2 h-6 w-6" />
    </div>
    <div className="ml-[9px] flex w-10 justify-center border-b-2 border-[#0078d7]">
      <RobotIcon className="mt-2 h-6 w-6" />
    </div>
    <div className="ml-auto mr-[6px] mt-[2px] w-[60px] whitespace-nowrap text-center leading-[18px]">
      5:56 AM
      <br />
      22/04/2024
    </div>
  </div>
);

const Explorer = () => (
  <div className={`${SEG} flex h-[1080px] w-[1920px] flex-col bg-white text-[11.5px] leading-4 tracking-[-0.17px]`}>
    <ExplorerTop />
    <Ribbon />
    <AddressBar />
    <div className="flex h-[842px]">
      <NavPane />
      <FileList />
    </div>
    <div className="flex h-6 items-center">
      <span className="ml-[14px] w-[48px] whitespace-nowrap text-[#1e395b]">4 items</span>
      <div className="h-[11px] w-px bg-[#eee]" />
      <div className="ml-auto mr-2 flex items-center gap-1">
        <div className="flex h-[23px] w-[22px] items-center justify-center border border-[#26a0da] bg-[#cbe8f6]">
          <Svg className="h-3 w-4" vb="0 0 16 12">
            <path d="M.5.5h4v11h-4zM6 2.500h4M12 2.500h4M6 6h4M12 6h4M6 9.500h4M12 9.500h4" stroke="#8a8a8a" />
            <path d="M2 2h1v1H2z" fill="#333" />
            <path d="M2 5.500h1v1H2z" fill="#06c" />
            <path d="M2 9h1v1H2z" fill="#c00" />
          </Svg>
        </div>
        <Svg className="mt-[-2px] h-[11px] w-[14px]" vb="0 0 14 11">
          <path d="M.5.5h13v10H.5z" fill="#fff" stroke="#999" />
          <path d="M2 2h10v3H2z" fill="#7db7f0" />
          <path d="M2 9V5l10 2v2z" fill="#3f7f8a" />
        </Svg>
      </div>
    </div>
    <RightTaskbar />
  </div>
);

export default function App() {
  return (
    <div className="flex h-[1080px] w-[3840px] overflow-hidden">
      <div className="flex h-[1080px] w-[1920px] flex-col overflow-hidden">
        <TabStrip />
        <Toolbar />
        <Page />
        <LeftTaskbar />
      </div>
      <Explorer />
    </div>
  );
}
